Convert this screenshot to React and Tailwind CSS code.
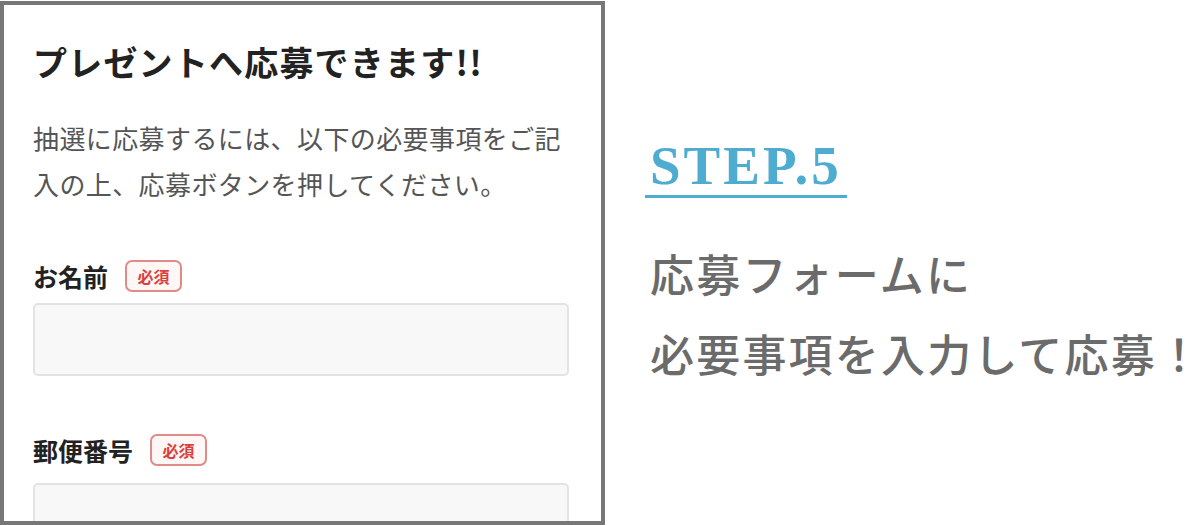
import React from "react";

const jp = { fontFamily: '"Noto Sans CJK JP", "Noto Sans", sans-serif' };

function Badge() {
  return (
    <span className="ml-[17px] inline-flex h-[32px] w-[57px] items-center justify-center rounded-[7px] border-2 border-[#e08a8a] bg-[#fff6f6] text-[16px] font-bold leading-none text-[#d9413c]">
      必須
    </span>
  );
}

export default function App() {
  return (
    <div className="flex h-[525px] w-[1200px] overflow-hidden bg-white" style={jp}>
      <div className="mt-[1px] h-[524px] w-[605px] shrink-0 overflow-hidden border-4 border-[#777777] bg-white px-[29px]">
        <h1 className="mt-[40px] text-[34px] font-bold leading-none tracking-[1.2px] text-[#222222]">
          プレゼントへ応募できます!!
        </h1>
        <p className="mt-[36px] text-[26px] leading-[46px] tracking-[0.4px] text-[#555555]">
          抽選に応募するには、以下の必要事項をご記入の上、応募ボタンを押してください。
        </p>
        <div className="mt-[53px] flex h-[32px] items-center">
          <span className="text-[25px] font-bold leading-none text-[#222222]">お名前</span>
          <Badge />
        </div>
        <div className="mt-[11px] h-[73px] w-[536px] rounded-[5px] border-2 border-[#e3e3e3] bg-[#f8f8f8]" />
        <div className="mt-[57px] flex h-[34px] items-center">
          <span className="text-[25px] font-bold leading-none text-[#222222]">郵便番号</span>
          <Badge />
        </div>
        <div className="mt-[16px] h-[73px] w-[536px] rounded-[5px] border-2 border-[#e3e3e3] bg-[#f8f8f8]" />
      </div>
      <div className="flex min-w-0 flex-col pl-[40px] pt-[138px]">
        <div className="self-start border-b-[3px] border-[#4eacd0] px-[5px] pb-[2px]">
          <span
            className="text-[55px] font-bold leading-none tracking-[3px] text-[#4eacd0]"
            style={{ fontFamily: '"Liberation Serif", "Times New Roman", serif' }}
          >
            STEP.5
          </span>
        </div>
        <div className="mt-[35px] pl-[5px] text-[44px] font-medium leading-[80px] tracking-[2.2px] text-[#6b6b6b] whitespace-nowrap">
          <div>応募フォームに</div>
          <div>
            必要事項を入力して応募
            <span className="inline-block w-[30px] overflow-visible tracking-normal">！</span>
          </div>
        </div>
      </div>
    </div>
  );
}
